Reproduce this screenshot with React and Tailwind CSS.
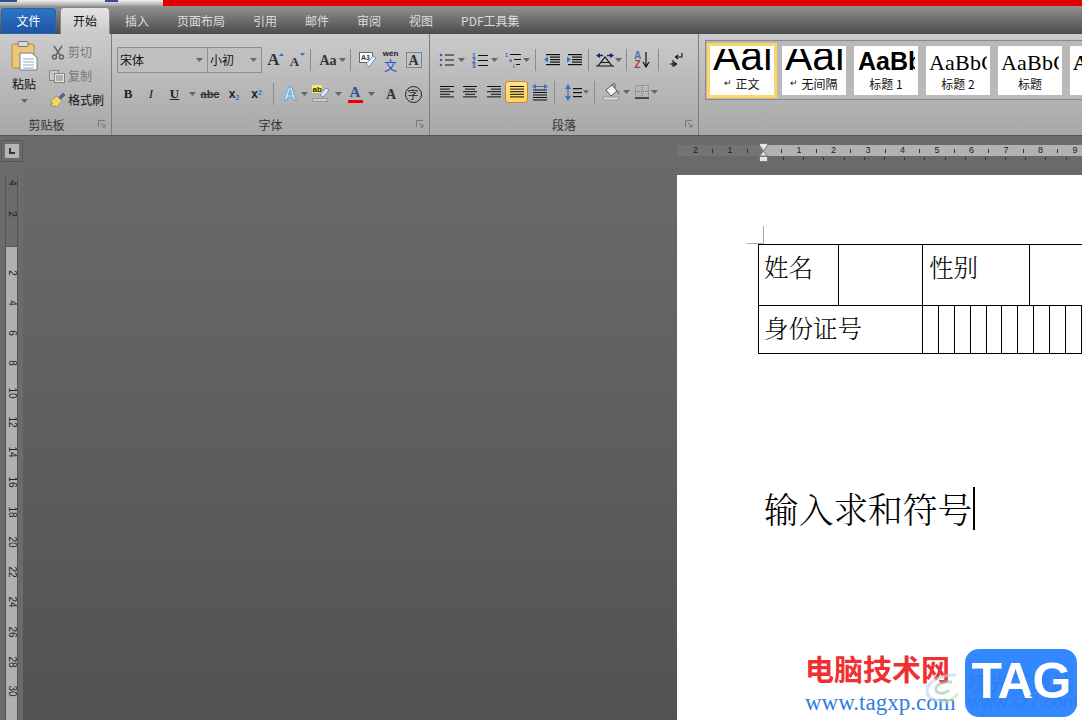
import React from "react";

const CJK = "font-['Noto_Sans_CJK_SC','Liberation_Sans',sans-serif]";

const CaretIcon = () => (
  <svg width="7" height="4" viewBox="0 0 7 4"><path d="M0 0h7L3.500 4z" fill="#666" /></svg>
);
const Caret = ({ w = 12 }) => (
  <span className="flex items-center justify-center shrink-0" style={{ width: w }}><CaretIcon /></span>
);
const Sep = ({ h = 22 }) => <span className="w-[1px] bg-[#8c8c8c] shrink-0" style={{ height: h }} />;
const Slot = ({ w, children }) => (
  <span className="flex items-center justify-center shrink-0 h-[22px]" style={{ width: w }}>{children}</span>
);
const Gap = ({ w }) => <span className="shrink-0" style={{ width: w }} />;

const Lines = ({ kind }) => {
  const rows = kind === "just" ? [14, 14, 14, 14, 14] : [14, 10, 14, 10, 14];
  return (
    <svg width="16" height="14" viewBox="0 0 16 14">
      {rows.map((w, i) => {
        const x = kind === "center" ? (16 - w) / 2 : kind === "right" ? 15 - w : 1;
        return <rect key={i} x={x} y={1 + i * 2.6} width={w} height="1" fill="#111" />;
      })}
    </svg>
  );
};
const Bullets = () => (
  <svg width="16" height="14" viewBox="0 0 16 14">
    {[2, 7, 12].map((y) => (
      <g key={y}><circle cx="2" cy={y} r="1.3" fill="#3a62b0" /><rect x="6" y={y - 0.5} width="9" height="1" fill="#111" /></g>
    ))}
  </svg>
);
const Numbers = () => (
  <svg width="16" height="15" viewBox="0 0 16 15">
    {[3, 8, 13].map((y, i) => (
      <g key={y}><text x="0" y={y + 2} fontSize="6.5" fontWeight="700" fill="#3a62b0" fontFamily="Liberation Sans">{i + 1}</text><rect x="6" y={y - 1} width="10" height="1" fill="#111" /></g>
    ))}
  </svg>
);
const Multi = () => (
  <svg width="18" height="16" viewBox="0 0 18 16">
    <text x="0" y="5" fontSize="5.5" fill="#3a62b0" fontWeight="700" fontFamily="Liberation Sans">1</text>
    <rect x="5" y="2" width="11" height="1" fill="#111" />
    <text x="4" y="10" fontSize="5.5" fill="#3a62b0" fontWeight="700" fontFamily="Liberation Sans">a</text>
    <rect x="9" y="7" width="7" height="1" fill="#111" />
    <text x="8" y="15.500" fontSize="5.5" fill="#3a62b0" fontWeight="700" fontFamily="Liberation Sans">i</text>
    <rect x="11" y="12" width="4" height="1" fill="#111" />
  </svg>
);
const Indent = ({ dir }) => (
  <svg width="16" height="14" viewBox="0 0 16 14">
    {[1, 3.5, 6, 8.5, 11].map((y, i) => (
      <rect key={i} x={i === 0 || i === 4 ? 2 : 6} y={y} width={i === 0 || i === 4 ? 14 : 10} height="1.2" fill="#111" />
    ))}
    <path d={dir === "l" ? "M0 6.500 4 3.500v6z" : "M5 6.500 1 3.500v6z"} fill="#3b6fc8" />
  </svg>
);
const Paste = () => (
  <svg width="28" height="30" viewBox="0 0 28 30">
    <rect x="2" y="3" width="22" height="24" rx="2" fill="#efc677" stroke="#b08a45" />
    <rect x="8" y="0.5" width="10" height="5" rx="1" fill="#d9d9d9" stroke="#777" />
    <path d="M10 12h12l5 5v12H10z" fill="#fff" stroke="#6f7f99" />
    <path d="M13 18h11M13 21h11M13 24h11M13 27h11" stroke="#9ab" />
  </svg>
);
const Scissors = () => (
  <svg width="14" height="15" viewBox="0 0 14 15" fill="none" stroke="#666" strokeWidth="1.5">
    <path d="M3 1l6 9M11 1L5 10" />
    <circle cx="3.5" cy="12" r="2" />
    <circle cx="10.5" cy="12" r="2" />
  </svg>
);
const CopyIcon = () => (
  <svg width="16" height="13" viewBox="0 0 16 13">
    <rect x="0.5" y="0.5" width="9" height="10" fill="#c8c8c8" stroke="#888" />
    <rect x="5.5" y="3.5" width="10" height="9" fill="#e8e8e8" stroke="#808080" />
    <path d="M7 6h7M7 8h7M7 10h7" stroke="#777" />
  </svg>
);
const Brush = () => (
  <svg width="17" height="16" viewBox="0 0 17 16">
    <path d="M9 6l5-5 2 2-5 5z" fill="#4a66a8" stroke="#26416f" strokeWidth="0.5" />
    <path d="M8 4l5 5-5 6-7-2 3-2-3-2z" fill="#f0d46e" stroke="#8d7730" strokeWidth="0.6" />
  </svg>
);
const Eraser = () => (
  <svg width="18" height="16" viewBox="0 0 18 16">
    <rect x="0.5" y="0.5" width="13" height="10" fill="#fff" stroke="#667" />
    <text x="2" y="8" fontSize="7" fontWeight="700" fill="#334" fontFamily="Liberation Sans">A3</text>
    <path d="M7 12l7-8 3 2-7 9z" fill="#e9eef8" stroke="#6f8dbd" />
  </svg>
);
const Wen = () => (
  <span className="flex h-[21px] w-[18px] flex-col items-center">
    <span className="font-['Liberation_Sans'] text-[8px] leading-[8px] font-bold text-[#222]">wén</span>
    <span className="text-[13px] leading-[13px] text-[#2a55c5]">文</span>
  </span>
);
const AxAa = ({ size, up }) => (
  <span className="relative flex h-[16px] w-[18px] items-end justify-center pr-[3px]">
    <span className="font-['Liberation_Serif'] leading-none font-bold text-[#333]" style={{ fontSize: size }}>A</span>
    <svg className="absolute top-[1px] right-0" width="5" height="3" viewBox="0 0 5 3">
      <path d={up ? "M0 3h5L2.500 0z" : "M0 0h5L2.500 3z"} fill="#3b6fc8" />
    </svg>
  </span>
);
const XChars = () => (
  <svg width="18" height="14" viewBox="0 0 18 14">
    <path d="M1 2.500h6M17 2.500h-6" stroke="#102a7a" strokeWidth="1.500" />
    <path d="M4 0v5L0 2.500zM14 0v5l4-2.500z" fill="#102a7a" />
    <path d="M2 13L9 4l7 9M5 9.500h8M0 13h18" stroke="#111" strokeWidth="1.200" fill="none" />
  </svg>
);
const Sort = () => (
  <span className="flex h-[20px] w-[18px] items-center">
    <span className="flex flex-col items-center font-['Liberation_Sans'] text-[10px] leading-[9px] font-bold">
      <span className="text-[#4a6fb8]">A</span>
      <span className="text-[#b03a3a]">Z</span>
    </span>
    <svg width="8" height="16" viewBox="0 0 8 16" className="ml-[1px]"><path d="M4 0v14M1 10l3 5 3-5" stroke="#111" strokeWidth="1.200" fill="none" /></svg>
  </span>
);
const Pilcrow = () => (
  <svg width="16" height="15" viewBox="0 0 16 15" fill="none" stroke="#111" strokeWidth="1.100">
    <path d="M14 0v4H8M10 2L7.500 4 10 6" />
    <path d="M2 11h6M6 9l2.500 2L6 13M5 7v7" />
  </svg>
);
const LineSp = () => (
  <svg width="18" height="17" viewBox="0 0 18 17">
    <path d="M3 0l3 5H0zM3 17l3-5H0z" fill="#3b6fc8" />
    <rect x="2.400" y="4" width="1.200" height="9" fill="#3b6fc8" />
    {[4, 8, 12].map((y) => <rect key={y} x="8" y={y} width="9" height="1.200" fill="#111" />)}
  </svg>
);
const Dist = () => (
  <svg width="16" height="17" viewBox="0 0 16 17">
    <path d="M0 2.500L4 0v5zM16 2.500L12 0v5z" fill="#3b6fc8" />
    <rect x="3" y="2" width="10" height="1" fill="#3b6fc8" />
    {[6, 8.5, 11, 13.5, 16].map((y) => <rect key={y} x="1" y={y - 0.5} width="14" height="1" fill="#111" />)}
  </svg>
);
const Bucket = () => (
  <svg width="17" height="18" viewBox="0 0 17 18">
    <rect x="0.5" y="14" width="15" height="3" fill="#ddd" stroke="#999" />
    <path d="M3 7l6-5 5 6-6 5z" fill="#f4f4f4" stroke="#555" />
    <path d="M9 2c0-2 3-2 3 0v3" fill="none" stroke="#555" />
    <path d="M14 7c2 1 3 3 2 5-1-1-2-3-2-5z" fill="#3b78c8" />
  </svg>
);
const BorderIcon = () => (
  <svg width="14" height="14" viewBox="0 0 14 14">
    <rect x="0.5" y="0.5" width="13" height="12" fill="none" stroke="#777" strokeDasharray="1 1" />
    <path d="M7 0v13M0 6.500h14" stroke="#777" strokeDasharray="1 1" />
    <rect x="0" y="12.500" width="14" height="1.200" fill="#111" />
  </svg>
);
const Highlighter = () => (
  <svg width="18" height="18" viewBox="0 0 18 18">
    <rect x="0" y="0" width="10" height="8" fill="#f4f05a" />
    <text x="0.5" y="7" fontSize="8" fontWeight="700" fill="#222" fontFamily="Liberation Sans">ab</text>
    <path d="M8 10l6-7 3 2-6 7z" fill="#e8eef8" stroke="#6f8dbd" />
    <rect x="0.5" y="13.5" width="15" height="3" fill="#ccc" stroke="#999" />
  </svg>
);

function Tabs() {
  const rest = ["插入", "页面布局", "引用", "邮件", "审阅", "视图", "PDF工具集"];
  return (
    <div className="flex h-[28px] shrink-0 items-end bg-linear-to-b from-[#929292] to-[#4c4c4c] pl-[1px]">
      <div className="flex h-[26px] w-[55px] items-center justify-center rounded-t-[3px] border border-[#2a62a8] bg-linear-to-b from-[#2b76c9] to-[#1e54a2] text-[12px] text-white">文件</div>
      <div className="ml-[4px] flex h-[27px] w-[50px] items-center justify-center rounded-t-[4px] border border-b-0 border-[#888] bg-linear-to-b from-[#e4e4e4] to-[#c9c9c9] text-[12px] text-[#111]">开始</div>
      <div className="ml-[15px] flex h-[27px] items-center gap-[28px] text-[12px] text-[#dcdcdc]">
        {rest.map((t) => <span key={t} className="whitespace-nowrap">{t}</span>)}
      </div>
    </div>
  );
}

function Group({ w, label, launcher = true, children }) {
  return (
    <div className="flex h-[102px] shrink-0 flex-col border-r border-[#7c7c7c]" style={{ width: w }}>
      <div className="h-[81px]">{children}</div>
      <div className="relative flex h-[19px] items-center justify-center text-[12px] text-[#333]">
        {label}
        {launcher && (
          <svg className="absolute top-[5px] right-[5px]" width="8" height="8" viewBox="0 0 8 8" fill="none" stroke="#777">
            <path d="M0.500 7V0.500H7M3 3l4 4M4 7h3V4" />
          </svg>
        )}
      </div>
    </div>
  );
}

function Clipboard() {
  return (
    <Group w={112} label={<span className="mr-[18px]">剪贴板</span>}>
      <div className="flex pt-[7px]">
        <div className="ml-[10px] flex w-[28px] flex-col items-center">
          <Paste />
          <span className="mt-[4px] text-[12px] leading-[18px] text-[#111]">粘贴</span>
          <span className="mt-[6px]"><CaretIcon /></span>
        </div>
        <div className="ml-[11px] flex flex-col gap-[2px] pt-[0px]">
          <div className="flex h-[22px] items-center"><span className="flex w-[19px] pl-[2px]"><Scissors /></span><span className="text-[12px] text-[#777]">剪切</span></div>
          <div className="flex h-[22px] items-center"><span className="flex w-[19px]"><CopyIcon /></span><span className="text-[12px] text-[#777]">复制</span></div>
          <div className="flex h-[22px] items-center"><span className="flex w-[19px]"><Brush /></span><span className="text-[12px] text-[#111]">格式刷</span></div>
        </div>
      </div>
    </Group>
  );
}

function FontGroup() {
  return (
    <Group w={318} label="字体">
      <div className="pt-[13px] pl-[5px]">
        <div className="flex h-[26px] items-center">
          <div className="flex h-[26px] w-[91px] items-center justify-between border border-[#8f8f8f] bg-[#bfbfbf] px-[2px] pb-[1px] text-[12px] text-[#111]">宋体<Caret /></div>
          <div className="flex h-[26px] w-[54px] items-center justify-between border border-l-0 border-[#8f8f8f] bg-[#bfbfbf] px-[2px] pb-[1px] text-[12px] text-[#111]">小初<Caret /></div>
          <Gap w={3} />
          <Slot w={20}><AxAa size={17} up /></Slot>
          <Slot w={22}><AxAa size={13} /></Slot>
          <Gap w={3} />
          <Sep />
          <Gap w={8} />
          <Slot w={18}><span className="font-['Liberation_Serif'] text-[14px] font-bold text-[#333]">Aa</span></Slot>
          <Caret w={11} />
          <Gap w={2} />
          <Sep />
          <Gap w={6} />
          <Slot w={22}><Eraser /></Slot>
          <Slot w={23}><Wen /></Slot>
          <Slot w={23}>
            <span className="flex h-[16px] w-[16px] items-center justify-center border border-[#6f86a8] bg-[#c4c4c4] font-['Liberation_Serif'] text-[14px] font-bold text-[#333]">A</span>
          </Slot>
        </div>
        <div className="mt-[10px] flex h-[22px] items-center">
          <Slot w={22}><span className="font-['Liberation_Serif'] text-[13px] font-bold text-[#222]">B</span></Slot>
          <Slot w={24}><span className="font-['Liberation_Serif'] text-[13px] text-[#222] italic">I</span></Slot>
          <Slot w={23}><span className="font-['Liberation_Serif'] text-[13px] font-bold text-[#222] underline">U</span></Slot>
          <Caret w={12} />
          <Slot w={24}><span className="font-['Liberation_Sans'] text-[11px] font-bold text-[#333] line-through">abc</span></Slot>
          <Slot w={24}><span className="font-['Liberation_Sans'] text-[12px] font-bold text-[#222]">x<sub className="text-[7px] text-[#3b6fc8]">2</sub></span></Slot>
          <Slot w={21}><span className="font-['Liberation_Sans'] text-[12px] font-bold text-[#222]">x<sup className="text-[7px] text-[#3b6fc8]">2</sup></span></Slot>
          <Gap w={6} />
          <Sep />
          <Gap w={7} />
          <Slot w={18}><span className="font-['Liberation_Sans'] text-[18px] font-bold text-[#eaf4fb] [-webkit-text-stroke:1px_#5fa8dc]">A</span></Slot>
          <Caret w={11} />
          <Slot w={22}><Highlighter /></Slot>
          <Caret w={12} />
          <Slot w={22}>
            <span className="flex flex-col items-center">
              <span className="font-['Liberation_Serif'] text-[15px] leading-[13px] font-bold text-[#2f4f9f]">A</span>
              <span className="mt-[1px] h-[3px] w-[15px] bg-[#f00000]" />
            </span>
          </Slot>
          <Caret w={10} />
          <Gap w={6} />
          <Slot w={18}><span className="bg-[#b4b4b4] px-[2px] font-['Liberation_Serif'] text-[14px] leading-[15px] font-bold text-[#333]">A</span></Slot>
          <Gap w={3} />
          <Slot w={20}><span className="flex h-[17px] w-[17px] items-center justify-center rounded-full border border-[#222] text-[11px] leading-none text-[#222]">字</span></Slot>
        </div>
      </div>
    </Group>
  );
}

function ParaGroup() {
  return (
    <Group w={269} label="段落">
      <div className="pt-[14px] pl-[9px]">
        <div className="flex h-[24px] items-center">
          <Slot w={16}><Bullets /></Slot>
          <Caret w={13} />
          <Gap w={4} />
          <Slot w={16}><Numbers /></Slot>
          <Caret w={13} />
          <Gap w={4} />
          <Slot w={18}><Multi /></Slot>
          <Caret w={7} />
          <Gap w={5} />
          <Sep />
          <Gap w={8} />
          <Slot w={16}><Indent dir="l" /></Slot>
          <Gap w={6} />
          <Slot w={16}><Indent dir="r" /></Slot>
          <Gap w={6} />
          <Sep />
          <Gap w={7} />
          <Slot w={18}><XChars /></Slot>
          <Caret w={9} />
          <Gap w={3} />
          <Sep />
          <Gap w={7} />
          <Slot w={18}><Sort /></Slot>
          <Gap w={6} />
          <Sep />
          <Gap w={9} />
          <Slot w={16}><Pilcrow /></Slot>
        </div>
        <div className="mt-[9px] flex h-[22px] items-center">
          <Slot w={16}><Lines kind="left" /></Slot>
          <Gap w={7} />
          <Slot w={16}><Lines kind="center" /></Slot>
          <Gap w={8} />
          <Slot w={16}><Lines kind="right" /></Slot>
          <Gap w={3} />
          <span className="flex h-[22px] w-[23px] shrink-0 items-center justify-center rounded-[3px] border border-[#c28a2e] bg-linear-to-b from-[#ffe48a] to-[#ffd25e]"><Lines kind="just" /></span>
          <Gap w={4} />
          <Slot w={16}><Dist /></Slot>
          <Gap w={6} />
          <Sep />
          <Gap w={10} />
          <Slot w={18}><LineSp /></Slot>
          <Caret w={6} />
          <Gap w={5} />
          <Sep />
          <Gap w={8} />
          <Slot w={17}><Bucket /></Slot>
          <Caret w={12} />
          <Gap w={3} />
          <Slot w={14}><BorderIcon /></Slot>
          <Caret w={11} />
        </div>
      </div>
    </Group>
  );
}

const Style = ({ sample, sampleClass, label, mark, active }) => (
  <div className={"flex h-[49px] w-[64px] shrink-0 flex-col items-center overflow-hidden bg-white pt-[3px] " + (active ? "outline-[3px] outline-[#fdd668]" : "")}>
    <div className={"h-[21px] w-[58px] overflow-hidden whitespace-nowrap text-black " + sampleClass}>{sample}</div>
    <div className="mt-[4px] flex h-[20px] items-center gap-[3px] text-[12px] text-[#111]">
      {mark && <span className="font-['Liberation_Sans'] text-[9px] leading-none">↵</span>}
      {label}
    </div>
  </div>
);

function Gallery() {
  return (
    <div className="min-w-0 flex-1 pt-[6px] pl-[6px]">
      <div className="flex h-[60px] w-[400px] items-center gap-[8px] border border-[#8a8a8a] bg-[#b9b9b9] pl-[4px]">
        <Style active mark label="正文" sample="Aal" sampleClass="font-['Liberation_Sans'] text-[41px] leading-[14px]" />
        <Style mark label="无间隔" sample="Aal" sampleClass="font-['Liberation_Sans'] text-[41px] leading-[14px]" />
        <Style label="标题 1" sample="AaBb" sampleClass="font-['Liberation_Sans'] font-bold text-[25px] leading-[25px] pl-[1px]" />
        <Style label="标题 2" sample="AaBbC" sampleClass="font-['Liberation_Serif'] font-medium text-[22px] leading-[28px] tracking-[0.2px]" />
        <Style label="标题" sample="AaBbC" sampleClass="font-['Liberation_Serif'] font-medium text-[22px] leading-[28px] tracking-[0.2px]" />
        <Style label="" sample="AaBbC" sampleClass="font-['Liberation_Serif'] font-bold text-[22px] leading-[28px]" />
      </div>
    </div>
  );
}

function Ribbon() {
  return (
    <div className="flex h-[102px] shrink-0 overflow-hidden border-b border-[#555] bg-linear-to-b from-[#cbcbcb] to-[#a7a7a7]">
      <Clipboard />
      <FontGroup />
      <ParaGroup />
      <Gallery />
    </div>
  );
}

function HRuler() {
  const seq = [];
  for (let v = -4; v <= 18; v++) seq.push(v);
  return (
    <div className="h-[39px] shrink-0 pt-[9px]">
      <div className="flex h-[11px] w-[405px] items-center overflow-hidden bg-linear-to-r from-[#747474] from-[86px] to-[#b2b2b2] to-[86px] pl-[10px] font-['Liberation_Sans'] text-[9px] leading-none text-[#222]">
        {seq.map((v) => (
          <span key={v} className="flex w-[17.25px] shrink-0 items-center justify-center">
            {v === 0 ? null : v % 2 === 0 ? Math.abs(v / 2) : <span className="h-[4px] w-[1px] bg-[#333]" />}
          </span>
        ))}
      </div>
      <div className="mt-[1px] flex pl-[106px]">
        {Array.from({ length: 15 }).map((_, i) => (
          <span key={i} className="flex w-[20.2px] shrink-0"><span className="h-[3px] w-[1px] bg-[#333]" /></span>
        ))}
      </div>
    </div>
  );
}

function VRuler() {
  const rest = [2, 4, 6, 8, 10, 12, 14, 16, 18, 20, 22, 24, 26, 28, 30];
  const Num = ({ n, h }) => (
    <span className="flex w-[11px] shrink-0 items-center justify-center" style={{ height: h }}>
      <span className="rotate-90 font-['Liberation_Sans'] text-[10px] leading-none text-[#222]">{n}</span>
    </span>
  );
  return (
    <div className="mt-[13px] ml-[5px] flex w-[13px] flex-1 flex-col overflow-hidden border-x border-[#555]">
      <div className="flex h-[71px] shrink-0 flex-col bg-[#6b6b6b]">
        <Num n={4} h={16} />
        <Num n={2} h={46} />
      </div>
      <div className="flex flex-1 flex-col border-t border-[#555] bg-[#b0b0b0] pt-[11px]">
        {rest.map((n) => <Num key={n} n={n} h={29.9} />)}
      </div>
    </div>
  );
}

function Doc() {
  const cells = Array.from({ length: 10 });
  return (
    <div className="w-[405px] flex-1 overflow-hidden bg-white pt-[51px] font-['Noto_Serif_CJK_SC','Noto_Sans_CJK_SC',serif] text-black">
      <div className="ml-[70px] h-[18px] w-[17px] border-r border-b border-[#aaa]" />
      <div className="ml-[81px] w-[340px] border-t border-l border-black">
        <div className="flex h-[61px] border-b border-black text-[24.5px] leading-[32px] font-light">
          <div className="w-[80px] border-r border-black pt-[6px] pl-[5px]">姓名</div>
          <div className="w-[84px] border-r border-black" />
          <div className="w-[107px] border-r border-black pt-[6px] pl-[6px]">性别</div>
        </div>
        <div className="flex h-[48px] border-b border-black">
          <div className="w-[164px] border-r border-black pt-[6px] pl-[5px] text-[24.5px] leading-[32px] font-light">身份证号</div>
          {cells.map((_, i) => <div key={i} className="w-[15.9px] shrink-0 border-r border-black" />)}
        </div>
      </div>
      <div className="mt-[132px] ml-[87px] flex h-[44px] items-center text-[34.7px] leading-[44px] font-light whitespace-nowrap">
        输入求和符号
        <span className="ml-[1px] h-[43px] w-[2px] bg-black" />
      </div>
    </div>
  );
}

function Watermark() {
  return (
    <div className="absolute right-[5px] bottom-[3px] flex items-start">
      <div className="relative mt-[3px] mr-[10px] flex w-[150px] flex-col">
        <span className="text-[29px] leading-[32px] font-bold whitespace-nowrap text-[#f03030]">电脑技术网</span>
        <span className="mt-[7px] font-['Liberation_Serif'] text-[23px] leading-[24px] whitespace-nowrap text-[#2f7de0]">www.tagxp.com</span>
        <svg className="absolute top-[20px] left-[118px] opacity-60" width="40" height="34" viewBox="0 0 40 34" fill="none" strokeLinecap="round">
          <path d="M32 3C18 3 5 9 4 18c-1 8 9 12 18 10" stroke="#b9d3ef" strokeWidth="3" />
          <path d="M28 10c-8-1-16 3-15 8 1 4 8 4 12 1" stroke="#9fc4a8" strokeWidth="3" />
          <path d="M20 30c6 0 12-3 14-8" stroke="#c9e4b0" strokeWidth="3" />
        </svg>
      </div>
      <div className="relative flex h-[68px] w-[112px] items-center justify-center overflow-hidden rounded-[14px] bg-[#3388ff]">
        <span className="absolute top-[22px] left-[3px] text-[21px] leading-[22px] whitespace-nowrap text-[#2f7fee]">极光下载站</span>
        <span className="relative pb-[4px] font-['Liberation_Sans'] text-[50px] leading-none font-bold tracking-[-1px] text-white">TAG</span>
        <span className="absolute bottom-[6px] left-[3px] font-['Liberation_Sans'] text-[18px] leading-none whitespace-nowrap text-[#2f7fee]">www.xz7.com</span>
      </div>
    </div>
  );
}

export default function App() {
  return (
    <div className={"relative flex h-[720px] w-[1082px] flex-col overflow-hidden bg-[#5a5a5a] " + CJK}>
      <div className="flex h-[6px] shrink-0">
        <div className="flex w-[163px] items-start bg-linear-to-b from-[#f2f2f2] to-[#a4a4a4]">
          <span className="h-[2px] w-[17px] bg-[#33508a]" />
          <span className="ml-[88px] h-[2px] w-[13px] bg-[#33508a]" />
        </div>
        <div className="flex-1 bg-[#e00000]" />
      </div>
      <Tabs />
      <Ribbon />
      <div className="flex min-h-0 flex-1 bg-linear-to-b from-[#6b6b6b] to-[#525252]">
        <div className="flex w-[23px] shrink-0 flex-col bg-[#6b6b6b]">
          <div className="mt-[4px] ml-[1px] flex h-[22px] w-[22px] shrink-0 items-center justify-center border border-[#555]">
            <span className="flex h-[14px] w-[14px] items-center justify-center bg-[#b5b5b5]">
              <svg width="8" height="8" viewBox="0 0 8 8"><path d="M2 1v5h5" fill="none" stroke="#333" strokeWidth="2" /></svg>
            </span>
          </div>
          <VRuler />
        </div>
        <div className="flex-1" />
        <div className="relative flex w-[405px] shrink-0 flex-col">
          <HRuler />
          <span className="absolute top-[7px] left-[82px] flex flex-col items-center">
            <svg width="9" height="19" viewBox="0 0 9 19">
              <path d="M0.500 0.500h8v2L4.500 8l-4-5.500zM4.500 8l4 5H0.500z" fill="#e4e4e4" stroke="#777" />
              <rect x="0.500" y="13.500" width="8" height="5" fill="#e4e4e4" stroke="#777" />
            </svg>
          </span>
          <Doc />
        </div>
      </div>
      <Watermark />
    </div>
  );
}
